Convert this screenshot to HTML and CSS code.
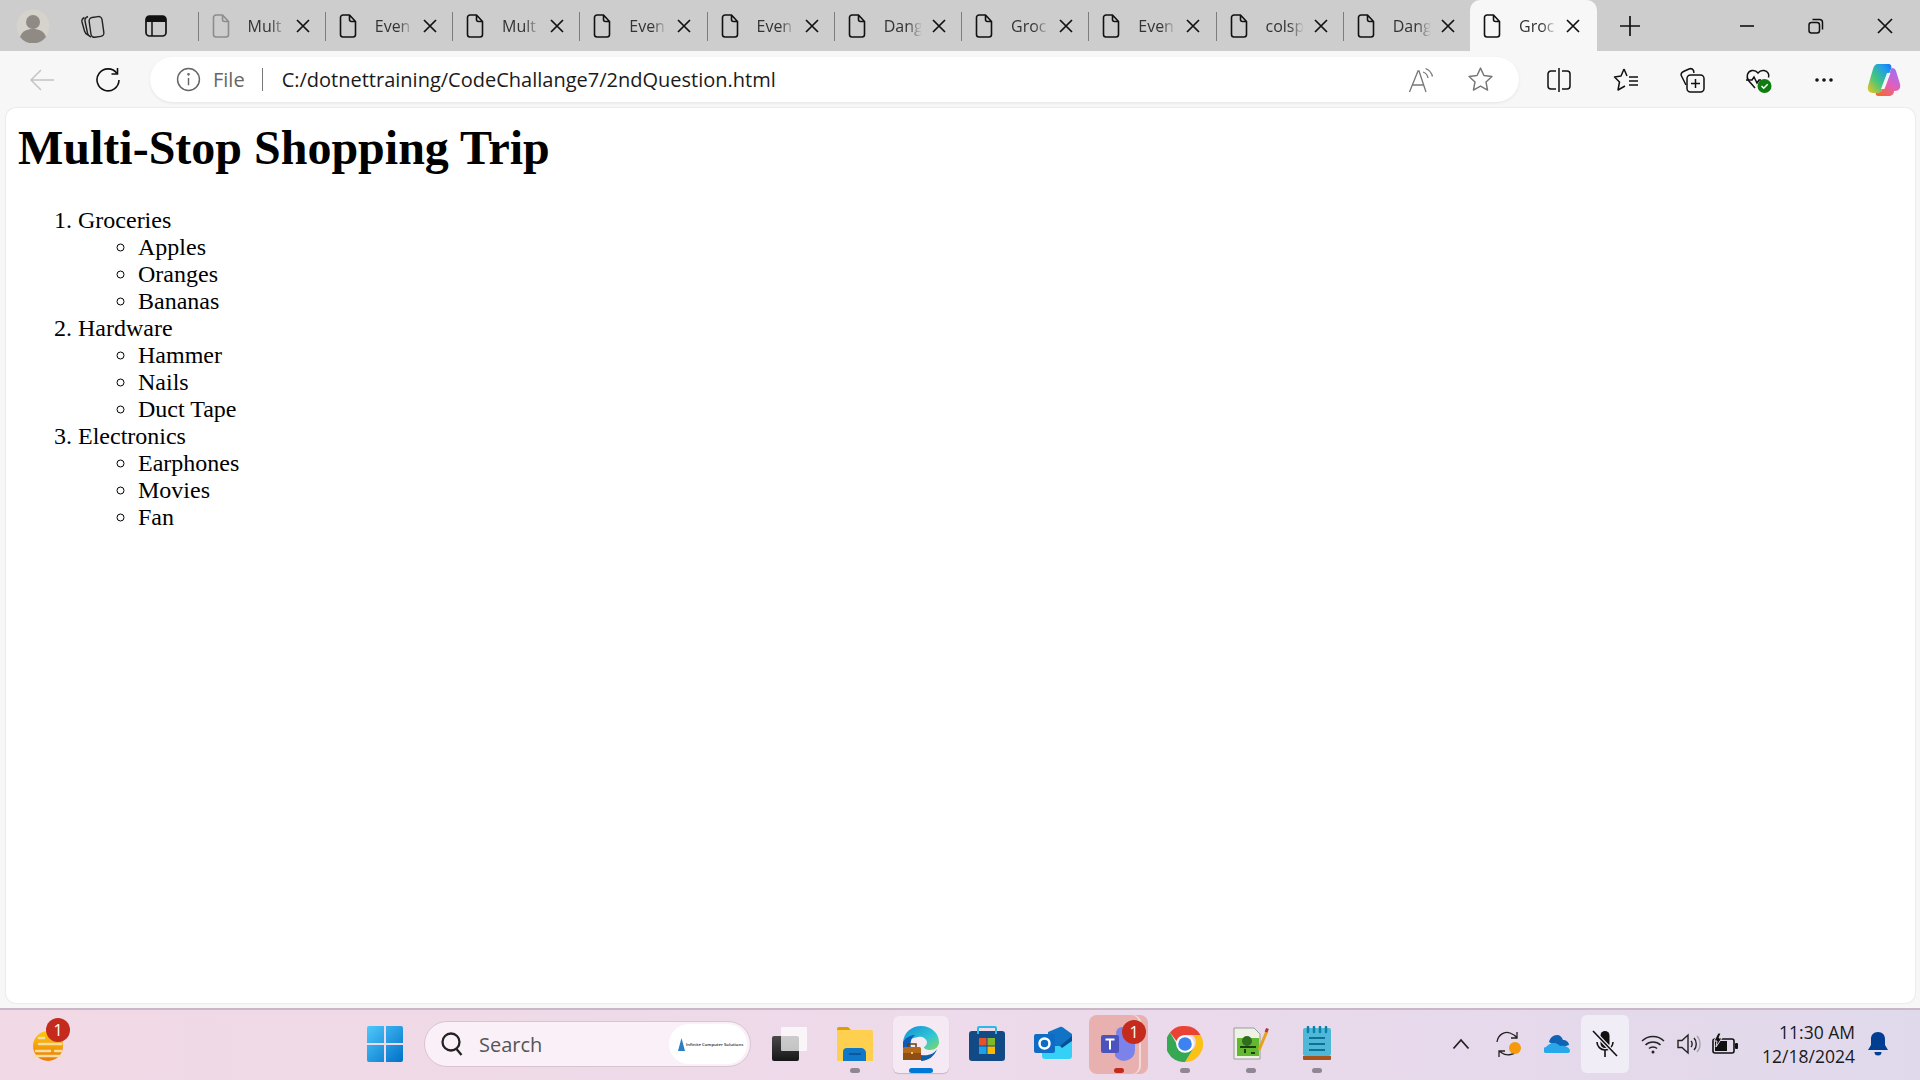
FILE: index.html
```html
<!DOCTYPE html>
<html lang="en">
<head>
    <meta charset="UTF-8">
    <title>Grocery list</title>
    <link rel="stylesheet" href="styles.css">
</head>
<body>
<svg class="defs" width="0" height="0">
    <symbol id="doc" viewBox="0 0 18 24">
        <path d="M1.5 3.5a2.5 2.5 0 0 1 2.5-2.5h6.5l6 6.5v13a2.5 2.5 0 0 1-2.5 2.5H4a2.5 2.5 0 0 1-2.5-2.5z M10.5 1v4.5a2 2 0 0 0 2 2h4" fill="none" stroke="currentColor" stroke-width="1.6" stroke-linejoin="round"/>
    </symbol>
    <symbol id="cross" viewBox="0 0 14 14">
        <path d="M1 1l12 12M13 1L1 13" fill="none" stroke="currentColor" stroke-width="1.7"/>
    </symbol>
</svg>

<div class="tabstrip">
    <div class="avatar-slot">
        <svg class="avatar" viewBox="0 0 34 34">
            <circle cx="17" cy="17" r="16.5" fill="#d6d3cd"/>
            <circle cx="17" cy="13" r="7" fill="#8f8a84"/>
            <path d="M4 28c2-6 7-8 13-8s11 2 13 8a16.5 16.5 0 0 1-26 0z" fill="#8f8a84"/>
        </svg>
    </div>
    <div class="strip-btn">
        <svg width="26" height="28" viewBox="0 0 26 28" fill="none" stroke="#222" stroke-width="1.4">
            <path d="M8 23c-2-1-3-2-3.500-4L2 10c-.5-2 .5-3.500 2.500-4.500"/>
            <path d="M11 25c-2-1-3-2-3.400-3.500L5 9c-.4-2 .6-3.500 3-4.500"/>
            <rect x="10" y="5" width="13" height="20" rx="3.500" transform="rotate(-8 16 15)"/>
        </svg>
    </div>
    <div class="strip-btn">
        <svg width="22" height="22" viewBox="0 0 22 22">
            <rect x="1" y="1" width="20" height="20" rx="3.500" fill="none" stroke="#111" stroke-width="1.700"/>
            <path d="M1 4.500a3.500 3.500 0 0 1 3.500-3.500h13a3.500 3.500 0 0 1 3.500 3.500v2.500H1z" fill="#111"/>
            <path d="M7 7v14" stroke="#111" stroke-width="1.500"/>
        </svg>
    </div>
    <div class="tabs">
        <div class="tab tab-dim">
            <svg class="tab-icon"><use href="#doc"/></svg>
            <span class="tab-title">Mult</span>
            <svg class="tab-close"><use href="#cross"/></svg>
        </div>
        <div class="tab">
            <svg class="tab-icon"><use href="#doc"/></svg>
            <span class="tab-title">Even</span>
            <svg class="tab-close"><use href="#cross"/></svg>
        </div>
        <div class="tab">
            <svg class="tab-icon"><use href="#doc"/></svg>
            <span class="tab-title">Mult</span>
            <svg class="tab-close"><use href="#cross"/></svg>
        </div>
        <div class="tab">
            <svg class="tab-icon"><use href="#doc"/></svg>
            <span class="tab-title">Even</span>
            <svg class="tab-close"><use href="#cross"/></svg>
        </div>
        <div class="tab">
            <svg class="tab-icon"><use href="#doc"/></svg>
            <span class="tab-title">Even</span>
            <svg class="tab-close"><use href="#cross"/></svg>
        </div>
        <div class="tab">
            <svg class="tab-icon"><use href="#doc"/></svg>
            <span class="tab-title">Dang</span>
            <svg class="tab-close"><use href="#cross"/></svg>
        </div>
        <div class="tab">
            <svg class="tab-icon"><use href="#doc"/></svg>
            <span class="tab-title">Groc</span>
            <svg class="tab-close"><use href="#cross"/></svg>
        </div>
        <div class="tab">
            <svg class="tab-icon"><use href="#doc"/></svg>
            <span class="tab-title">Even</span>
            <svg class="tab-close"><use href="#cross"/></svg>
        </div>
        <div class="tab">
            <svg class="tab-icon"><use href="#doc"/></svg>
            <span class="tab-title">colsp</span>
            <svg class="tab-close"><use href="#cross"/></svg>
        </div>
        <div class="tab">
            <svg class="tab-icon"><use href="#doc"/></svg>
            <span class="tab-title">Dang</span>
            <svg class="tab-close"><use href="#cross"/></svg>
        </div>
        <div class="tab tab-active">
            <svg class="tab-icon"><use href="#doc"/></svg>
            <span class="tab-title">Groc</span>
            <svg class="tab-close"><use href="#cross"/></svg>
        </div>
    </div>
    <div class="new-tab">
        <svg width="22" height="22" viewBox="0 0 22 22"><path d="M11 1v20M1 11h20" stroke="#111" stroke-width="1.700"/></svg>
    </div>
    <div class="window-btns">
        <div class="window-btn">
            <svg width="16" height="16" viewBox="0 0 16 16"><path d="M1 8h14" stroke="#111" stroke-width="1.600"/></svg>
        </div>
        <div class="window-btn">
            <svg width="16" height="16" viewBox="0 0 16 16" fill="none" stroke="#111" stroke-width="1.500">
                <rect x="1" y="4.500" width="10.500" height="10.500" rx="2.500"/>
                <path d="M4.500 1.500h7a3 3 0 0 1 3 3v7"/>
            </svg>
        </div>
        <div class="window-btn">
            <svg width="16" height="16" viewBox="0 0 16 16"><path d="M1 1l14 14M15 1L1 15" fill="none" stroke="#111" stroke-width="1.700"/></svg>
        </div>
    </div>
</div>

<div class="toolbar">
    <div class="nav-btn">
        <svg width="26" height="24" viewBox="0 0 26 24" fill="none" stroke="#c4c4c4" stroke-width="1.500"><path d="M25 12H2M12 2L2 12l10 10"/></svg>
    </div>
    <div class="nav-btn">
        <svg width="26" height="26" viewBox="0 0 26 26" fill="none" stroke="#111" stroke-width="1.600">
            <path d="M22 6.500A11 11 0 1 0 24 13"/>
            <path d="M22.500 1v6h-6"/>
        </svg>
    </div>
    <div class="addressbar">
        <svg class="info-icon" width="25" height="25" viewBox="0 0 24 24" fill="none" stroke="#666" stroke-width="1.400">
            <circle cx="12" cy="12" r="10.500"/>
            <path d="M12 10.500v7"/>
            <circle cx="12" cy="7" r=".6"/>
        </svg>
        <span class="scheme">File</span>
        <span class="divider"></span>
        <span class="url">C:/dotnettraining/CodeChallange7/2ndQuestion.html</span>
        <svg class="read-icon" width="26" height="26" viewBox="0 0 26 26" fill="none" stroke="#777" stroke-width="1.300">
            <path d="M1.500 25L10 4h1l7 21M4.500 18h11"/>
            <path d="M15 5c3 1 4.500 3 5 6M17.500 1.500c4 1.500 6 4 7 8"/>
        </svg>
        <svg class="star-icon" width="27" height="27" viewBox="0 0 26 26" fill="none" stroke="#777" stroke-width="1.400" stroke-linejoin="round">
            <path d="M13 2l3.300 7.200 7.700.9-5.700 5.300 1.500 7.800-6.800-3.900-6.800 3.900 1.500-7.800L2 10.100l7.700-.9z"/>
        </svg>
    </div>
    <div class="tool-btns">
        <div class="tool-btn">
            <svg width="24" height="26" viewBox="0 0 24 26" fill="none" stroke="#111" stroke-width="1.500">
                <path d="M9 4H4a3 3 0 0 0-3 3v12a3 3 0 0 0 3 3h5M15 4h5a3 3 0 0 1 3 3v12a3 3 0 0 1-3 3h-5M12 1v24"/>
            </svg>
        </div>
        <div class="tool-btn">
            <svg width="26" height="26" viewBox="0 0 26 26" fill="none" stroke="#111" stroke-width="1.500" stroke-linejoin="round">
                <path d="M11 2L8 9l-6.500 1 5 5L5 23l7-4M11 2l3 7"/>
                <path d="M16 10h9M16 14h9M16 18h9"/>
            </svg>
        </div>
        <div class="tool-btn">
            <svg width="26" height="26" viewBox="0 0 26 26" fill="none" stroke="#111" stroke-width="1.500">
                <path d="M7 18L2.500 9c-1-2 0-3.500 2-4.500L10 2c2-.8 3.500-.2 4.500 1.500L15 6"/>
                <rect x="8" y="8" width="17" height="17" rx="3.500"/>
                <path d="M16.500 12v9M12 16.500h9"/>
            </svg>
        </div>
        <div class="tool-btn">
            <svg width="28" height="28" viewBox="0 0 28 28" fill="none">
                <path d="M10 22L3.500 14.500C1 11 2 5.500 7 4.500c2.500-.4 4.500.6 6 2.500 1.500-1.900 3.500-2.900 6-2.500 4 .7 5.500 4 4.500 7" stroke="#111" stroke-width="1.500"/>
                <path d="M1 14h6l2-3 3 6 2-3h2" stroke="#111" stroke-width="1.500"/>
                <circle cx="19.500" cy="20" r="7" fill="#107c10"/>
                <path d="M16.500 20l2.200 2.200 4-4" stroke="#fff" stroke-width="1.500"/>
            </svg>
        </div>
        <div class="tool-btn">
            <svg width="20" height="6" viewBox="0 0 20 6" fill="#111"><circle cx="3" cy="3" r="1.800"/><circle cx="10" cy="3" r="1.800"/><circle cx="17" cy="3" r="1.800"/></svg>
        </div>
        <div class="tool-btn">
            <svg width="34" height="34" viewBox="0 0 34 34">
                <defs>
                    <linearGradient id="copA" x1="0" y1="1" x2="1" y2="0">
                        <stop offset="0" stop-color="#f7c31c"/>
                        <stop offset=".4" stop-color="#45c77a"/>
                        <stop offset=".8" stop-color="#1d9bf0"/>
                        <stop offset="1" stop-color="#1c6ff0"/>
                    </linearGradient>
                    <linearGradient id="copB" x1=".3" y1="1" x2=".8" y2="0">
                        <stop offset="0" stop-color="#f5683a"/>
                        <stop offset=".45" stop-color="#e05fc0"/>
                        <stop offset="1" stop-color="#9a72f2"/>
                    </linearGradient>
                </defs>
                <path d="M11 1h10c3 0 4 2 3 5l-8 19c-1 3-3 5-6 5H6c-4 0-6-3-5-7L6 6c1-3 2-5 5-5z" fill="url(#copA)"/>
                <path d="M25 5c2 0 3.500 1 4 3l4 13c1 4-1 7-5 7h-1c0 3-2 5-6 5H12c-3 0-4-2-3-3 4 0 6-2 7-5l7-16c.6-2 1.400-4 2-4z" fill="url(#copB)"/>
                <path d="M20 10h3.500l-6 16H14z" fill="#fff" fill-opacity=".92"/>
            </svg>
        </div>
    </div>
</div>

<div class="viewport">
    <main class="page">
        <h1>Multi-Stop Shopping Trip</h1>
        <ol>
            <li>Groceries
                <ul>
                    <li>Apples</li>
                    <li>Oranges</li>
                    <li>Bananas</li>
                </ul>
            </li>
            <li>Hardware
                <ul>
                    <li>Hammer</li>
                    <li>Nails</li>
                    <li>Duct Tape</li>
                </ul>
            </li>
            <li>Electronics
                <ul>
                    <li>Earphones</li>
                    <li>Movies</li>
                    <li>Fan</li>
                </ul>
            </li>
        </ol>
    </main>
</div>

<footer class="taskbar">
    <div class="weather">
        <svg width="48" height="48" viewBox="0 0 48 48">
            <defs>
                <linearGradient id="sun" x1="0" y1="0" x2="0" y2="1">
                    <stop offset="0" stop-color="#ffc90e"/>
                    <stop offset="1" stop-color="#ee7606"/>
                </linearGradient>
            </defs>
            <circle cx="24" cy="26" r="15" fill="url(#sun)"/>
            <path d="M15 18h5M15 24h22M12 31h14M31 31h6M10 36h26" stroke="#f3dfa0" stroke-width="2.500" stroke-linecap="round"/>
        </svg>
        <span class="badge weather-badge">1</span>
    </div>

    <div class="start-slot">
        <svg width="36" height="36" viewBox="0 0 36 36">
            <defs>
                <linearGradient id="win" x1="0" y1="0" x2="1" y2="1">
                    <stop offset="0" stop-color="#4fc8fb"/>
                    <stop offset="1" stop-color="#0070c8"/>
                </linearGradient>
            </defs>
            <path d="M0 2a2 2 0 0 1 2-2h15v17H0zM19 0h15a2 2 0 0 1 2 2v15H19zM0 19h17v17H2a2 2 0 0 1-2-2zM19 19h17v15a2 2 0 0 1-2 2H19z" fill="url(#win)"/>
        </svg>
    </div>

    <div class="searchbox">
        <svg class="search-icon" width="24" height="26" viewBox="0 0 24 26" fill="none" stroke="#222" stroke-width="2.300">
            <circle cx="11" cy="11" r="8.500"/>
            <path d="M16.500 18l5 6"/>
        </svg>
        <span class="search-label">Search</span>
        <div class="search-logo">
            <svg class="logo-mark" width="7" height="13" viewBox="0 0 7 13"><path d="M3.500 0L7 13H0z" fill="#2b7fc4"/></svg>
            <span class="search-logo-text">Infinite Computer Solutions</span>
        </div>
    </div>

    <div class="apps">
        <div class="app">
            <svg width="36" height="36" viewBox="0 0 36 36">
                <defs>
                    <linearGradient id="taskDark" x1="0" y1="0" x2="0" y2="1">
                        <stop offset="0" stop-color="#4a4a4a"/>
                        <stop offset="1" stop-color="#161616"/>
                    </linearGradient>
                </defs>
                <rect x="1" y="10" width="27" height="25" rx="2" fill="url(#taskDark)"/>
                <rect x="10" y="1" width="26" height="24" rx="1" fill="#fff" fill-opacity=".72"/>
            </svg>
        </div>
        <div class="app">
            <svg width="36" height="36" viewBox="0 0 36 36">
                <path d="M0 3a2 2 0 0 1 2-2h9l3 3h-14z" fill="#dba000"/>
                <path d="M0 4h34a2 2 0 0 1 2 2v29H0z" fill="#ffcf4f"/>
                <path d="M6 35v-9a4 4 0 0 1 4-4h14a5 5 0 0 1 5 5v8z" fill="#0f78c8"/>
                <path d="M12 28h12" stroke="#0a4f8c" stroke-width="1.500"/>
            </svg>
            <span class="pip"></span>
        </div>
        <div class="app app-open">
            <svg width="38" height="38" viewBox="0 0 38 38">
                <defs>
                    <linearGradient id="edgeA" x1="0" y1="0" x2="1" y2="1">
                        <stop offset="0" stop-color="#0f8fd8"/>
                        <stop offset=".6" stop-color="#33c6d4"/>
                        <stop offset="1" stop-color="#7ddb5c"/>
                    </linearGradient>
                </defs>
                <path d="M1 17C2 7 10 1 19 1c10 0 18 7 18 16 0 5-4 8-9 8-3 0-6-1-6-3 2-1 3-3 3-5-1-4-5-6-9-5-6 1-10 3-15 5z" fill="url(#edgeA)"/>
                <path d="M1 17c3-5 8-7 12-7-4 3-5 7-4 13H1z" fill="#0c5db8"/>
                <path d="M19 30c8 1 13-1 16-6-2 7-9 12-16 12z" fill="#0c5fa8"/>
                <rect x="1" y="22" width="18" height="13" rx="1.500" fill="#b4681c"/>
                <rect x="1" y="28" width="18" height="7" fill="#8f4f12"/>
                <path d="M6 22v-3h8v3" fill="none" stroke="#6b3c10" stroke-width="1.500"/>
                <rect x="9" y="27" width="2" height="2" fill="#f5c44a"/>
            </svg>
            <span class="pip pip-active"></span>
        </div>
        <div class="app">
            <svg width="36" height="36" viewBox="0 0 36 36">
                <rect x="0" y="5" width="36" height="30" rx="3" fill="#124a86"/>
                <path d="M9 8V2a1 1 0 0 1 1-1h16a1 1 0 0 1 1 1v6" fill="none" stroke="#2eb8e6" stroke-width="2"/>
                <rect x="10" y="12" width="7.500" height="7.500" fill="#e8502a"/>
                <rect x="18.500" y="12" width="7.500" height="7.500" fill="#7db928"/>
                <rect x="10" y="20.500" width="7.500" height="7.500" fill="#1aa3e8"/>
                <rect x="18.500" y="20.500" width="7.500" height="7.500" fill="#fdb900"/>
            </svg>
        </div>
        <div class="app">
            <svg width="38" height="36" viewBox="0 0 38 36">
                <path d="M8 14h30v16a3 3 0 0 1-3 3H11a3 3 0 0 1-3-3z" fill="#35d0f5"/>
                <path d="M14 6l12-5c1-.4 2-.2 3 .5L38 8v6l-10 6H14z" fill="#1173c6"/>
                <path d="M26 20l12-10v5L28 22z" fill="#0a4f96"/>
                <rect x="0" y="8" width="21" height="19" rx="2" fill="#0f6cc4"/>
                <circle cx="10.500" cy="17.500" r="5" fill="none" stroke="#fff" stroke-width="2.500"/>
            </svg>
        </div>
        <div class="app app-alert">
            <svg width="36" height="36" viewBox="0 0 36 36">
                <circle cx="21" cy="7" r="6" fill="#7b83eb"/>
                <path d="M14 11h15a5 5 0 0 1 5 5v8a11 11 0 0 1-20 6z" fill="#7b83eb"/>
                <circle cx="31" cy="8" r="4" fill="#5c63c4"/>
                <rect x="0" y="9" width="18" height="18" rx="2" fill="#4b53bc"/>
                <path d="M4.500 13.500h9M9 13.500v10" stroke="#fff" stroke-width="2"/>
            </svg>
            <span class="badge app-badge">1</span>
            <span class="pip pip-alert"></span>
        </div>
        <div class="app">
            <svg width="36" height="36" viewBox="0 0 36 36">
                <path d="M18 0a18 18 0 0 1 15.600 9H18a9 9 0 0 0-8.500 6L3 6.500A18 18 0 0 1 18 0z" fill="#ea4335"/>
                <path d="M33.600 9A18 18 0 0 1 18 36l8-13a9 9 0 0 0-1-14z" fill="#fbc116"/>
                <path d="M3 6.500l7.800 13.500a9 9 0 0 0 15.200 3l-8 13A18 18 0 0 1 3 6.500z" fill="#34a853"/>
                <circle cx="18" cy="18" r="8.800" fill="#fff"/>
                <circle cx="18" cy="18" r="6.800" fill="#3e82f1"/>
            </svg>
            <span class="pip"></span>
        </div>
        <div class="app">
            <svg width="36" height="36" viewBox="0 0 36 36">
                <path d="M1 2h20l6 6v25H1z" fill="#eef2e6" stroke="#9a9a9a"/>
                <path d="M4 12h22v18H4z" fill="#62b82e"/>
                <circle cx="14" cy="15" r="5" fill="#2f6d1e"/>
                <path d="M7 21h16M12 27v-4M18 27h4" stroke="#1d3d10" stroke-width="2"/>
                <path d="M26 24L34 5" stroke="#e6a21c" stroke-width="3"/>
                <path d="M33 6l1.500-3.500" stroke="#b03535" stroke-width="3"/>
            </svg>
            <span class="pip"></span>
        </div>
        <div class="app">
            <svg width="28" height="36" viewBox="0 0 28 36">
                <rect x="0" y="2" width="28" height="28" rx="2" fill="#4fb8d8"/>
                <path d="M0 30h28v3a1 1 0 0 1-1 1H1a1 1 0 0 1-1-1z" fill="#a8521c"/>
                <path d="M5 1v5M11 1v5M17 1v5M23 1v5" stroke="#0e7fa6" stroke-width="2.500" stroke-linecap="round"/>
                <path d="M6 12h16M6 18h16M6 24h16" stroke="#0e7093" stroke-width="2"/>
            </svg>
            <span class="pip"></span>
        </div>
    </div>

    <div class="tray">
        <div class="tray-item">
            <svg width="18" height="12" viewBox="0 0 18 12" fill="none" stroke="#222" stroke-width="1.800"><path d="M1.500 10.500L9 2l7.500 8.500"/></svg>
        </div>
        <div class="tray-item">
            <svg width="26" height="28" viewBox="0 0 26 28" fill="none" stroke="#222" stroke-width="1.300">
                <path d="M1 12C2 5 8 1 14 3c3 1 5 2 7 5M21 2v6h-6"/>
                <path d="M20 22c-3 3-10 4-14 1l-3-2M3 27v-6h6"/>
                <circle cx="19" cy="18" r="6" fill="#f59a0c" stroke="none"/>
            </svg>
        </div>
        <div class="tray-item">
            <svg width="26" height="18" viewBox="0 0 26 18">
                <path d="M5 7c1-4 4-7 8-7 3 0 5 2 6 5 3 0 6 2 6 5l-10 3z" fill="#0f62b4"/>
                <path d="M3 18a3 3 0 0 1-1-6c2-2 4-4 8-4 3 0 5 2 6 3 4-1 10 1 10 5 0 1-1 2-2 2z" fill="#28a8ea"/>
            </svg>
        </div>
        <div class="tray-item tray-mic">
            <svg width="26" height="28" viewBox="0 0 26 28">
                <rect x="8.500" y="1" width="9" height="17" rx="4.500" fill="#111"/>
                <path d="M5 12a8 8 0 0 0 16 0M13 20v7" fill="none" stroke="#111" stroke-width="1.600"/>
                <path d="M1 1l24 25" stroke="#f0eef6" stroke-width="4"/>
                <path d="M1 1l24 25" stroke="#111" stroke-width="1.600"/>
            </svg>
        </div>
        <div class="tray-item">
            <svg width="24" height="20" viewBox="0 0 24 20" fill="none" stroke="#222" stroke-width="1.500">
                <path d="M1 7c6-6 16-6 22 0M4.500 11c4-4 11-4 15 0M8 14.500c2-2 6-2 8 0"/>
                <circle cx="12" cy="18" r="1.500" fill="#222" stroke="none"/>
            </svg>
        </div>
        <div class="tray-item tray-volume">
            <svg width="24" height="22" viewBox="0 0 24 22" fill="none" stroke="#222" stroke-width="1.400">
                <path d="M1 7.500h4L11 2v18l-6-5.500H1z"/>
                <path d="M14 8c1.500 1.500 1.500 4.500 0 6M17 5c3 3 3 9 0 12"/>
                <path d="M20 3c4 4 4 12 0 16" stroke="#a9a3b0"/>
            </svg>
        </div>
        <div class="tray-item">
            <svg width="26" height="22" viewBox="0 0 26 22">
                <rect x="1" y="6" width="21" height="14" rx="2" fill="none" stroke="#111" stroke-width="1.600"/>
                <rect x="3" y="8" width="12" height="10" fill="#111"/>
                <rect x="23" y="10" width="3" height="6" rx="1" fill="#111"/>
                <path d="M6 0L2 8h3l-1 6 6-9H7l2-5z" fill="#111" stroke="#e6deeb"/>
            </svg>
        </div>
        <div class="clock">
            <span>11:30 AM</span>
            <span>12/18/2024</span>
        </div>
        <div class="bell">
            <svg width="20" height="24" viewBox="0 0 20 24">
                <path d="M10 0c4.500 0 7 3 7 7v6l3 5H0l3-5V7c0-4 2.500-7 7-7z" fill="#003e92"/>
                <path d="M6.500 20h7a3.500 3.500 0 0 1-7 0z" fill="#003e92"/>
            </svg>
        </div>
    </div>
</footer>
</body>
</html>
```

FILE: styles.css
```css
html, body {
    height: 100%;
    margin: 0;
}

body {
    display: flex;
    flex-direction: column;
    height: 1080px;
    overflow: hidden;
    background: #f7f7f7;
    font-family: "Open Sans", "Noto Sans", sans-serif;
    color: #111;
}

.defs {
    position: absolute;
}

/* Tab strip */
.tabstrip {
    display: flex;
    flex: 0 0 51px;
    align-items: center;
    background: #cdcdcd;
}

.avatar-slot {
    display: flex;
    flex: 0 0 66px;
    justify-content: center;
}

.avatar {
    width: 34px;
    height: 34px;
}

.strip-btn {
    display: flex;
    flex: 0 0 63px;
    justify-content: center;
    margin-left: -5px;
    margin-right: 5px;
}

.tabs {
    display: flex;
    align-items: stretch;
    height: 51px;
    margin-left: 5.500px;
}

.tab {
    position: relative;
    display: flex;
    flex: 0 0 127.250px;
    box-sizing: border-box;
    align-items: center;
    padding-left: 14px;
}

.tab::before {
    content: "";
    position: absolute;
    left: 0;
    top: 12px;
    height: 29px;
    border-left: 1px solid #7d7d7d;
}

.tab-icon {
    flex: 0 0 18px;
    width: 18px;
    height: 24px;
    color: #111;
}

.tab-title {
    width: 38px;
    margin-left: 18px;
    overflow: hidden;
    font-size: 16px;
    line-height: 22px;
    white-space: nowrap;
    color: #333;
    -webkit-mask-image: linear-gradient(90deg, #000 60%, transparent 100%);
    mask-image: linear-gradient(90deg, #000 60%, transparent 100%);
}

.tab-close {
    width: 14px;
    height: 14px;
    margin-left: 10px;
    color: #111;
}

.tab-dim .tab-icon {
    color: #8c8c8c;
}

.tab-active {
    padding-left: 13px;
    background: #f7f7f7;
    border-radius: 10px 10px 0 0;
}

.tab-active .tab-close {
    margin-left: 9px;
}

.tab-active::before {
    display: none;
}

.new-tab {
    display: flex;
    flex: 0 0 66px;
    justify-content: center;
}

.window-btns {
    display: flex;
    margin-left: auto;
    padding-right: 27px;
    gap: 53px;
}

.window-btn {
    display: flex;
    width: 16px;
    height: 16px;
}

/* Address row */
.toolbar {
    display: flex;
    flex: 0 0 57px;
    box-sizing: border-box;
    align-items: center;
    padding: 6px 0;
}

.nav-btn {
    display: flex;
    flex: 0 0 66px;
    justify-content: center;
    margin-left: 9px;
}

.nav-btn + .nav-btn {
    margin-left: 0;
}

.addressbar {
    display: flex;
    flex: 0 0 1369px;
    box-sizing: border-box;
    align-items: center;
    height: 45px;
    margin-left: 9px;
    padding: 0 25px 0 26px;
    background: #fff;
    border-radius: 23px;
    box-shadow: 0 1px 3px rgba(0, 0, 0, 0.08);
}

.scheme {
    margin-left: 12px;
    font-size: 20px;
    color: #666;
}

.divider {
    width: 1px;
    height: 23px;
    margin: 0 19px 0 17px;
    background: #777;
}

.url {
    font-size: 20px;
    color: #1a1a1a;
}

.read-icon {
    margin-left: auto;
}

.star-icon {
    margin-left: 33px;
}

.tool-btns {
    display: flex;
    align-items: center;
    margin-left: 7px;
}

.tool-btn {
    display: flex;
    flex: 0 0 66.500px;
    justify-content: center;
}

.tool-btn:nth-child(5) {
    flex-basis: 64px;
}

.tool-btn:last-child {
    flex-basis: 56px;
}

/* Page itself */
.viewport {
    display: flex;
    flex: 0 0 902px;
    box-sizing: border-box;
    padding: 0 5px 5px 6px;
    border-bottom: 2px solid #c9b6c6;
}

.page {
    flex: 1;
    box-sizing: border-box;
    padding: 12px 12px 0;
    background: #fff;
    border-radius: 10px;
    box-shadow: 0 0 0 1px #ececec;
    font-family: "Liberation Serif", serif;
    font-size: 24px;
    color: #000;
}

.page h1 {
    margin: 0 0 32px;
    font-size: 48px;
}

.page ol,
.page ul {
    margin: 0;
    padding-left: 60px;
}

.page ul {
    list-style-type: circle;
}

/* Taskbar */
.taskbar {
    display: flex;
    flex: 1;
    box-sizing: border-box;
    align-items: center;
    padding-bottom: 2px;
    background: linear-gradient(90deg, #f1d9e5 0%, #eddaea 50%, #e0d9ec 100%);
}

.weather {
    position: relative;
    display: flex;
    flex: 0 0 72px;
    box-sizing: border-box;
    padding-left: 24px;
}

.badge {
    position: absolute;
    display: flex;
    align-items: center;
    justify-content: center;
    width: 24px;
    height: 24px;
    font-size: 16px;
    color: #fff;
    background: #c42b1c;
    border-radius: 50%;
}

.weather-badge {
    left: 46px;
    top: -2px;
}

.start-slot {
    display: flex;
    flex: 0 0 36px;
    margin-left: 295px;
}

.searchbox {
    display: flex;
    flex: 0 0 327px;
    box-sizing: border-box;
    align-items: center;
    height: 46px;
    margin-left: 21px;
    padding: 0 3px 0 15px;
    background: #f9f1f7;
    border: 1px solid #d8c3d3;
    border-radius: 23px;
}

.search-label {
    margin-left: 15px;
    font-size: 20px;
    color: #555;
}

.search-logo {
    display: flex;
    align-items: center;
    width: 78px;
    height: 40px;
    margin-left: auto;
    padding-left: 9px;
    box-sizing: border-box;
    background: #fff;
    border-radius: 20px;
}

.logo-mark {
    flex: none;
}

.search-logo-text {
    margin-left: 1px;
    font-size: 4.300px;
    font-weight: 600;
    white-space: nowrap;
    color: #222;
}

.apps {
    display: flex;
    margin-left: 5px;
}

.app {
    position: relative;
    display: flex;
    flex: 0 0 66px;
    align-items: center;
    justify-content: center;
    height: 68px;
}

.pip {
    position: absolute;
    left: 28px;
    bottom: 5px;
    width: 10px;
    height: 5px;
    background: #8f8794;
    border-radius: 3px;
}

.app-open::before {
    content: "";
    position: absolute;
    left: 5px;
    top: 6px;
    width: 56px;
    height: 57px;
    background: #f5e9f4;
    border-radius: 6px;
    box-shadow: 0 1px 1px rgba(120, 90, 120, 0.3);
}

.app-open svg {
    position: relative;
}

.pip-active {
    left: 21px;
    width: 24px;
    background: #0078d4;
}

.app-alert::before {
    content: "";
    position: absolute;
    left: 3px;
    top: 5px;
    width: 50px;
    height: 59px;
    background: #e8b0ae;
    border-radius: 8px;
    box-shadow: 2px 0 0 #f3dada, 9px 0 0 #e8b0ae;
}

.app-alert svg {
    position: relative;
}

.app-badge {
    left: 36px;
    top: 10px;
}

.pip-alert {
    background: #c42b1c;
}

.tray {
    display: flex;
    align-items: center;
    height: 68px;
    margin-left: 87px;
}

.tray-item {
    display: flex;
    flex: 0 0 48px;
    justify-content: center;
}

.tray-volume {
    flex-basis: 24px;
}

.tray-mic {
    align-items: center;
    height: 58px;
    background: #f0edf6;
    border-radius: 6px;
}

.clock {
    display: flex;
    flex-direction: column;
    align-items: flex-end;
    flex: 0 0 106px;
    font-size: 17.500px;
    line-height: 24px;
    color: #1a1a1a;
}

.bell {
    display: flex;
    flex: 0 0 46px;
    justify-content: center;
}
```
